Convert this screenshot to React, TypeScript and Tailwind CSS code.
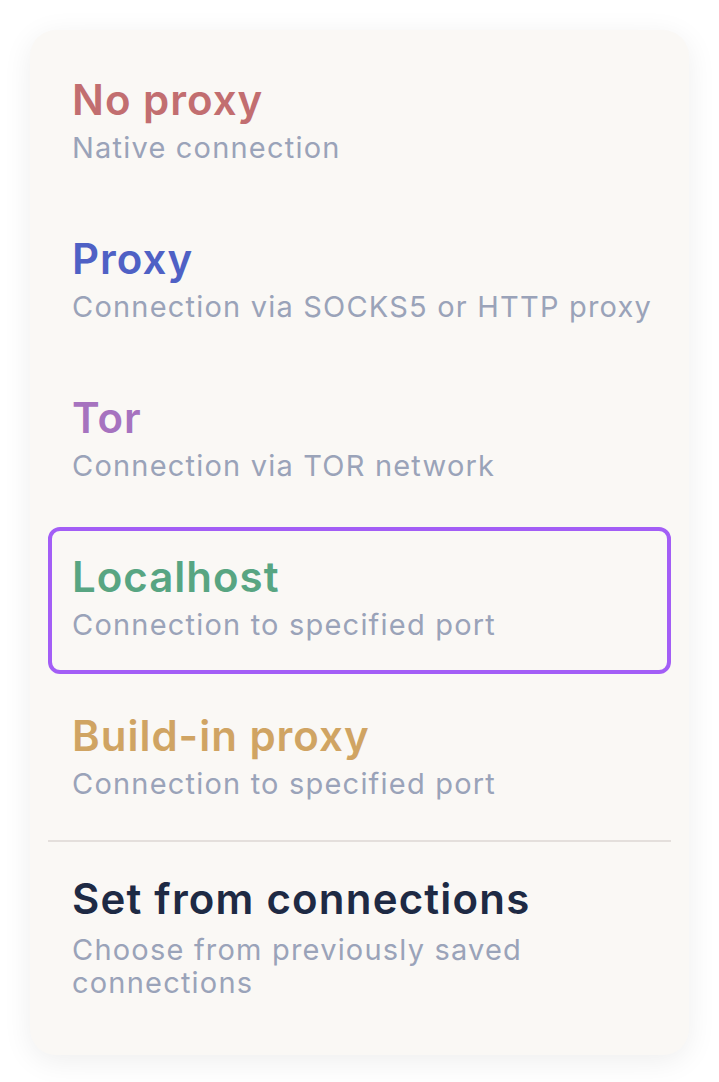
import { useState } from 'react';

interface Option {
  id: string;
  title: string;
  desc: string;
  color: string;
}

const options: Option[] = [
  { id: 'none', title: 'No proxy', desc: 'Native connection', color: 'text-[#c26e70]' },
  { id: 'proxy', title: 'Proxy', desc: 'Connection via SOCKS5 or HTTP proxy', color: 'text-[#4f61c5]' },
  { id: 'tor', title: 'Tor', desc: 'Connection via TOR network', color: 'text-[#a673bf]' },
  { id: 'local', title: 'Localhost', desc: 'Connection to specified port', color: 'text-[#58a582]' },
  { id: 'builtin', title: 'Build-in proxy', desc: 'Connection to specified port', color: 'text-[#d0a463]' },
];

function Item({ opt, active, onClick }: { opt: Option; active: boolean; onClick: () => void }) {
  return (
    <button
      onClick={onClick}
      className={`flex h-[147px] flex-col justify-center gap-[6px] rounded-[12px] border-4 px-[20px] pb-[8px] text-left ${
        active ? 'border-[#a35ef6]' : 'border-transparent'
      }`}
    >
      <span className={`text-[42px] leading-[50px] font-semibold tracking-[1px] ${opt.color}`}>{opt.title}</span>
      <span className="whitespace-nowrap text-[29px] leading-[34px] tracking-[1.2px] text-[#9aa3b9]">{opt.desc}</span>
    </button>
  );
}

export default function App() {
  const [selected, setSelected] = useState('local');

  return (
    <div className="min-h-screen bg-white pt-[30px] pl-[30px]" style={{ fontFamily: 'Inter, "Noto Sans", sans-serif' }}>
      <div className="flex w-[659px] flex-col rounded-[26px] bg-[#faf8f5] px-[18px] pt-[20px] pb-[28px] shadow-[0_6px_30px_rgba(0,0,0,0.07)]">
        <div className="flex flex-col gap-[12px]">
          {options.map((o) => (
            <Item key={o.id} opt={o} active={selected === o.id} onClick={() => setSelected(o.id)} />
          ))}
        </div>
        <div className="mt-[7px] h-[2px] bg-[#e4dfdc]" />
        <button
          onClick={() => setSelected('saved')}
          className={`mt-[7px] flex flex-col gap-[9px] rounded-[12px] border-4 px-[20px] pt-[21px] pb-[24px] text-left ${
            selected === 'saved' ? 'border-[#a35ef6]' : 'border-transparent'
          }`}
        >
          <span className="text-[42px] leading-[50px] font-semibold tracking-[1.2px] text-[#1e2a44]">
            Set from connections
          </span>
          <span className="w-[480px] text-[29px] leading-[33px] tracking-[1.2px] text-[#9aa3b9]">
            Choose from previously saved connections
          </span>
        </button>
      </div>
    </div>
  );
}
